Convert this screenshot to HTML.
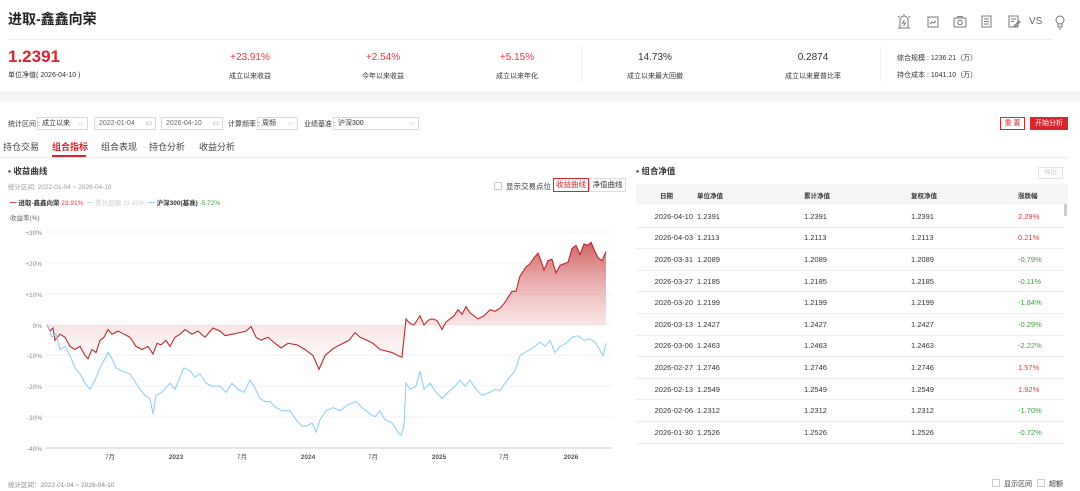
<!DOCTYPE html>
<html><head><meta charset="utf-8">
<style>
*{margin:0;padding:0;box-sizing:border-box}
body{width:1080px;height:491px;background:#fff;font-family:"Liberation Sans","Noto Sans CJK SC",sans-serif;color:#333;position:relative;overflow:hidden}
.a{position:absolute;white-space:nowrap}
.red{color:#e0383e}.green{color:#3aa23a}
.stat{position:absolute;text-align:center;width:120px}
.stat .v{font-size:10px;color:#e0383e}
.stat .l{font-size:7px;color:#333;margin-top:8px}
.sel{position:absolute;height:13px;border:1px solid #d9d9d9;font-size:7px;line-height:11px;padding-left:4px;color:#333}
.tab{position:absolute;top:140px;font-size:9px;color:#444}
table{border-collapse:collapse;font-size:7.5px}
td{height:21.6px;border-bottom:1px solid #eee;color:#333}
</style></head><body>
<div class="a" style="left:8px;top:9px;font-size:14px;font-weight:bold;color:#222">进取-鑫鑫向荣</div>
<svg class="a" style="left:895px;top:12px" width="180" height="20" viewBox="0 0 180 20" fill="none" stroke="#777" stroke-width="1">
<path d="M3 16h12M5 16V8a4 4 0 0 1 8 0v8M9 2v2M3 4l1.5 1.5M15 4l-1.5 1.5M9.5 8l-2 3h3l-2 3"/>
<rect x="33" y="5" width="10" height="10"/><path d="M35 12l2-2 2 1 2-2"/>
<rect x="59" y="6" width="12" height="9" rx="1"/><circle cx="65" cy="10.5" r="2.3"/><path d="M62 6l1-1.5h4l1 1.5"/>
<rect x="87" y="4" width="9" height="11"/><path d="M89 7h5M89 9.5h5M89 12h5"/>
<rect x="114" y="4" width="9" height="11"/><path d="M116 7h5M116 9.5h3M119 14l5-5 1 1-5 5z"/>
<circle cx="165" cy="8" r="4"/><path d="M163 12v3h4v-3M164 17h2"/>
</svg>
<div class="a" style="left:1029px;top:16px;font-size:10px;color:#666">VS</div>
<div class="a" style="left:8px;top:39px;width:1044px;height:1px;background:#eee"></div>
<div class="a" style="left:8px;top:47px;font-size:17px;font-weight:bold;color:#d9232d">1.2391</div>
<div class="a" style="left:8px;top:70px;font-size:7px">单位净值( 2026-04-10 )</div>
<div class="stat" style="left:190px;top:52px"><div class="v">+23.91%</div><div class="l">成立以来收益</div></div>
<div class="stat" style="left:323px;top:52px"><div class="v">+2.54%</div><div class="l">今年以来收益</div></div>
<div class="stat" style="left:457px;top:52px"><div class="v">+5.15%</div><div class="l">成立以来年化</div></div>
<div class="stat" style="left:595px;top:52px"><div class="v" style="color:#333">14.73%</div><div class="l">成立以来最大回撤</div></div>
<div class="stat" style="left:753px;top:52px"><div class="v" style="color:#333">0.2874</div><div class="l">成立以来夏普比率</div></div>
<div class="a" style="left:581px;top:46px;width:1px;height:36px;background:#f0f0f0"></div>
<div class="a" style="left:880px;top:46px;width:1px;height:36px;background:#f0f0f0"></div>
<div class="a" style="left:897px;top:53px;font-size:7px">综合规模 : 1236.21（万）</div>
<div class="a" style="left:897px;top:70px;font-size:7px">持仓成本 : 1041.10（万）</div>
<div class="a" style="left:0;top:91px;width:1080px;height:11px;background:#f4f4f4"></div>
<div class="a" style="left:8px;top:119px;font-size:7px">统计区间 :</div>
<div class="sel" style="left:37px;top:117px;width:51px">成立以来 <span style="float:right;margin-right:4px;color:#aaa">⌵</span></div>
<div class="sel" style="left:94px;top:117px;width:62px;color:#666">2022-01-04 <span style="float:right;margin-right:3px;color:#999">▭</span></div>
<div class="sel" style="left:161px;top:117px;width:62px;color:#666">2026-04-10 <span style="float:right;margin-right:3px;color:#999">▭</span></div>
<div class="a" style="left:228px;top:119px;font-size:7px">计算频率 :</div>
<div class="sel" style="left:257px;top:117px;width:41px">周频 <span style="float:right;margin-right:4px;color:#aaa">⌵</span></div>
<div class="a" style="left:304px;top:119px;font-size:7px">业绩基准 :</div>
<div class="sel" style="left:333px;top:117px;width:86px">沪深300 <span style="float:right;margin-right:4px;color:#aaa">⌵</span></div>
<div class="a" style="left:1000px;top:117px;width:25px;height:13px;border:1px solid #d9232d;color:#d9232d;font-size:7px;line-height:11px;text-align:center">重 置</div>
<div class="a" style="left:1030px;top:117px;width:38px;height:13px;background:#d9232d;color:#fff;font-size:7px;line-height:13px;text-align:center">开始分析</div>
<div class="tab" style="left:3px">持仓交易</div>
<div class="tab" style="left:52px;color:#d9232d;font-weight:bold">组合指标</div>
<div class="tab" style="left:101px">组合表现</div>
<div class="tab" style="left:149px">持仓分析</div>
<div class="tab" style="left:199px">收益分析</div>
<div class="a" style="left:0;top:157px;width:1068px;height:1px;background:#eee"></div>
<div class="a" style="left:52px;top:155px;width:34px;height:2px;background:#d9232d"></div>
<div class="a" style="left:8px;top:165px;font-size:8.5px;font-weight:bold">▪ 收益曲线</div>
<div class="a" style="left:8px;top:181px;font-size:6.5px;color:#999">统计区间: 2022-01-04 ~ 2026-04-10</div>
<div class="a" style="left:494px;top:182px;width:8px;height:8px;border:1px solid #ccc"></div>
<div class="a" style="left:506px;top:181px;font-size:7.5px">显示交易点位</div>
<div class="a" style="left:553px;top:178px;width:36px;height:14px;border:1px solid #d9232d;color:#d9232d;font-size:7.5px;line-height:12px;text-align:center">收益曲线</div>
<div class="a" style="left:589px;top:178px;width:37px;height:14px;border:1px solid #ddd;font-size:7.5px;line-height:12px;text-align:center">净值曲线</div>
<div class="a" style="left:10px;top:197px;font-size:6.5px"><span style="color:#b22">━</span> <b>进取-鑫鑫向荣</b> <span class="red">23.91%</span>&nbsp; <span style="color:#ccc">━ 累计超额 11.42%</span>&nbsp; <span style="color:#7cc4ee">━</span> <b>沪深300(基准)</b> <span class="green">-5.72%</span></div>
<div class="a" style="left:10px;top:212px;font-size:6.5px;color:#666">收益率(%)</div>
<svg class="a" style="left:0;top:0" width="630" height="470">
<defs><linearGradient id="g" x1="0" y1="27" x2="0" y2="-15" gradientUnits="userSpaceOnUse"><stop offset="0" stop-color="#c43c3c" stop-opacity=".8"/><stop offset=".55" stop-color="#eeb0b0" stop-opacity=".5"/><stop offset=".65" stop-color="#f3c8c8" stop-opacity=".45"/><stop offset="1" stop-color="#fdf0f0" stop-opacity=".25"/></linearGradient></defs>
<g stroke="#f2f2f2" stroke-width="1">
<line x1="45" y1="232" x2="612" y2="232"/><line x1="45" y1="263" x2="612" y2="263"/><line x1="45" y1="294" x2="612" y2="294"/><line x1="45" y1="325" x2="612" y2="325"/><line x1="45" y1="355" x2="612" y2="355"/><line x1="45" y1="386" x2="612" y2="386"/><line x1="45" y1="417" x2="612" y2="417"/></g>
<line x1="45" y1="448" x2="612" y2="448" stroke="#ccc"/>
<g font-size="6.5" fill="#888" text-anchor="end"><text x="42" y="235">+30%</text><text x="42" y="266">+20%</text><text x="42" y="297">+10%</text><text x="42" y="328">0%</text><text x="42" y="358">-10%</text><text x="42" y="389">-20%</text><text x="42" y="420">-30%</text><text x="42" y="451">-40%</text></g>
<g font-size="6.5" fill="#555" text-anchor="middle"><text x="110" y="459">7月</text><text x="176" y="459" font-weight="bold">2023</text><text x="242" y="459">7月</text><text x="308" y="459" font-weight="bold">2024</text><text x="373" y="459">7月</text><text x="439" y="459" font-weight="bold">2025</text><text x="504" y="459">7月</text><text x="571" y="459" font-weight="bold">2026</text></g>
<g transform="translate(0,325) scale(1,-3.06)">
<polygon fill="url(#g)" points="47,0 50,-2 53,-1 55,-5 60,-3 65,-4 70,-7 75,-8 80,-7 85,-10 88,-11 92,-8 96,-9 100,-5 104,-4 108,-1.5 112,-3 118,-2 124,-3 130,-4 136,-7 142,-8 148,-7 153,-9.5 157,-6 161,-6.5 166,-5 170,-7 175,-4 180,-3 185,-1.5 192,-3 198,-2 205,-4 213,-1 220,-2 225,-3.5 232,-3 240,-2.5 246,-2 251,-0.5 256,-4 261,-5 268,-4 275,-6 281,-7.5 288,-6 297,-6.5 305,-8 313,-10 319,-14.5 325,-10 332,-8 337,-7 343,-6 349,-5 355,-2.5 360,-4 367,-5 373,-6 380,-8 386,-8.5 392,-9 398,-10 402,-10.5 406,2 410,0.5 414,0 418,2 420,3 424,0 428,1.5 432,2 437,1.5 442,-1.5 446,1 450,2 454,3 458,5 462,3.5 466,6 470,4 474,3 478,2 484,3 490,5 495,4.5 500,5.5 504,7 508,9 512,11 516,11 520,16 526,19 530,20 534,22 538,23.5 541,21 544,18 548,21 552,21.5 556,17 560,19.5 564,20 568,20.5 572,25 576,26 580,23 584,26.5 588,26 591,27 595,24 598,22 602,21 606,24 606,0"/>
</g>
<g transform="translate(0,325) scale(1,-3.06)" fill="none" stroke-width="1.1">
<polyline vector-effect="non-scaling-stroke" stroke="#b8282c" points="47,0 50,-2 53,-1 55,-5 60,-3 65,-4 70,-7 75,-8 80,-7 85,-10 88,-11 92,-8 96,-9 100,-5 104,-4 108,-1.5 112,-3 118,-2 124,-3 130,-4 136,-7 142,-8 148,-7 153,-9.5 157,-6 161,-6.5 166,-5 170,-7 175,-4 180,-3 185,-1.5 192,-3 198,-2 205,-4 213,-1 220,-2 225,-3.5 232,-3 240,-2.5 246,-2 251,-0.5 256,-4 261,-5 268,-4 275,-6 281,-7.5 288,-6 297,-6.5 305,-8 313,-10 319,-14.5 325,-10 332,-8 337,-7 343,-6 349,-5 355,-2.5 360,-4 367,-5 373,-6 380,-8 386,-8.5 392,-9 398,-10 402,-10.5 406,2 410,0.5 414,0 418,2 420,3 424,0 428,1.5 432,2 437,1.5 442,-1.5 446,1 450,2 454,3 458,5 462,3.5 466,6 470,4 474,3 478,2 484,3 490,5 495,4.5 500,5.5 504,7 508,9 512,11 516,11 520,16 526,19 530,20 534,22 538,23.5 541,21 544,18 548,21 552,21.5 556,17 560,19.5 564,20 568,20.5 572,25 576,26 580,23 584,26.5 588,26 591,27 595,24 598,22 602,21 606,24"/>
<polyline vector-effect="non-scaling-stroke" stroke="#8fd0f5" points="47,0 52,-4 56,-3 60,-8 65,-7 70,-10 75,-14 80,-16 85,-19 90,-21 95,-18 100,-14 105,-11 108,-9 112,-11 116,-14 122,-15 130,-16 136,-19 140,-21 145,-23 150,-24 153,-29 156,-23 162,-22 170,-19 175,-21 180,-17 184,-14 190,-15 195,-17 200,-16 206,-19 212,-20 220,-20 226,-22 232,-19 238,-21 244,-22 250,-18 254,-20 260,-24 265,-25 270,-25 276,-27 282,-28 290,-28 296,-31 302,-33 307,-33 312,-32 316,-35 320,-31 326,-28 333,-27 340,-28 348,-26 356,-25 362,-27 370,-29 375,-30 380,-28 385,-31 392,-32 398,-35 401,-36 404,-33 406,-19 410,-21 416,-20 420,-15 424,-21 430,-19 436,-22 442,-24 448,-22 455,-20 460,-18 465,-20 470,-18 476,-21 482,-23 490,-22 495,-21 500,-21.5 505,-19 510,-17 515,-15 520,-10 525,-9 530,-8 535,-7 540,-5.5 545,-7 550,-5 555,-9 560,-7 566,-6 572,-4 578,-3.5 584,-5 590,-4.5 596,-6 603,-10 606,-6"/>
</g>
</svg>
<div class="a" style="left:8px;top:479px;font-size:6.5px;color:#888">统计区间：2022-01-04 ~ 2026-04-10</div>
<div class="a" style="left:636px;top:165px;font-size:8.5px;font-weight:bold">▪ 组合净值</div>
<div class="a" style="left:1038px;top:167px;width:25px;height:12px;border:1px solid #e3e3e3;color:#ccc;font-size:6.5px;line-height:10px;text-align:center">导出</div>
<div class="a" style="left:636px;top:184px;width:432px;height:21px;background:#f5f5f5"></div>
<table class="a" style="left:636px;top:184px;width:428px">
<tr style="font-weight:bold;font-size:6.5px"><td style="height:21px;border:0;width:61px;text-align:center">日期</td><td style="border:0;width:107px">单位净值</td><td style="border:0;width:107px">累计净值</td><td style="border:0;width:107px">复权净值</td><td style="border:0">涨跌幅</td></tr>
<tr><td style="text-align:right;padding-right:4px">2026-04-10</td><td>1.2391</td><td>1.2391</td><td>1.2391</td><td class="red">2.29%</td></tr>
<tr><td style="text-align:right;padding-right:4px">2026-04-03</td><td>1.2113</td><td>1.2113</td><td>1.2113</td><td class="red">0.21%</td></tr>
<tr><td style="text-align:right;padding-right:4px">2026-03-31</td><td>1.2089</td><td>1.2089</td><td>1.2089</td><td class="green">-0.79%</td></tr>
<tr><td style="text-align:right;padding-right:4px">2026-03-27</td><td>1.2185</td><td>1.2185</td><td>1.2185</td><td class="green">-0.11%</td></tr>
<tr><td style="text-align:right;padding-right:4px">2026-03-20</td><td>1.2199</td><td>1.2199</td><td>1.2199</td><td class="green">-1.84%</td></tr>
<tr><td style="text-align:right;padding-right:4px">2026-03-13</td><td>1.2427</td><td>1.2427</td><td>1.2427</td><td class="green">-0.29%</td></tr>
<tr><td style="text-align:right;padding-right:4px">2026-03-06</td><td>1.2463</td><td>1.2463</td><td>1.2463</td><td class="green">-2.22%</td></tr>
<tr><td style="text-align:right;padding-right:4px">2026-02-27</td><td>1.2746</td><td>1.2746</td><td>1.2746</td><td class="red">1.57%</td></tr>
<tr><td style="text-align:right;padding-right:4px">2026-02-13</td><td>1.2549</td><td>1.2549</td><td>1.2549</td><td class="red">1.92%</td></tr>
<tr><td style="text-align:right;padding-right:4px">2026-02-06</td><td>1.2312</td><td>1.2312</td><td>1.2312</td><td class="green">-1.70%</td></tr>
<tr><td style="text-align:right;padding-right:4px">2026-01-30</td><td>1.2526</td><td>1.2526</td><td>1.2526</td><td class="green">-0.72%</td></tr>
</table>
<div class="a" style="left:1064px;top:204px;width:3px;height:12px;background:#ccc"></div>
<div class="a" style="left:992px;top:479px;width:8px;height:8px;border:1px solid #ccc"></div>
<div class="a" style="left:1004px;top:479px;font-size:7px">显示区间</div>
<div class="a" style="left:1037px;top:479px;width:8px;height:8px;border:1px solid #ccc"></div>
<div class="a" style="left:1049px;top:479px;font-size:7px">超额</div>
</body></html>
